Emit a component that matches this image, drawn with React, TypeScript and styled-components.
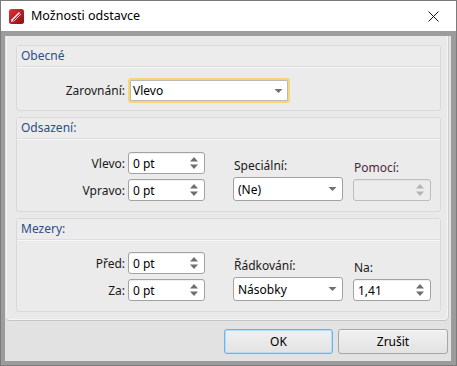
import React from "react";
import styled, { createGlobalStyle } from "styled-components";

const Global = createGlobalStyle`
  html, body { margin: 0; padding: 0; background: #ffffff; }
  body { font-family: "Segoe UI", "Noto Sans", "Open Sans", sans-serif; font-size: 12px; }
  * { box-sizing: border-box; }
`;

const Window = styled.div`
  width: 457px;
  height: 366px;
  border: 1px solid #7b7b7b;
  display: flex;
  flex-direction: column;
  background: #ffffff;
`;

const TitleBar = styled.div`
  height: 30px;
  display: flex;
  align-items: center;
  padding-left: 8px;
  background: #ffffff;
  flex: none;
`;

const TitleText = styled.div`
  margin-left: 7px;
  font-size: 12.5px;
  color: #000;
  flex: 1;
  padding-bottom: 1px;
`;

const CloseBtn = styled.div`
  width: 46px;
  height: 30px;
  display: flex;
  align-items: center;
  justify-content: center;
`;

const Frame = styled.div`
  flex: 1;
  background: #9c9c9c;
  padding: 5px 5px 4px 4px;
  display: flex;
`;

const Body = styled.div`
  flex: 1;
  background: #e2e2e2;
  display: flex;
  flex-direction: column;
  padding: 0 3px 0 1px;
`;

const Panel = styled.div`
  background: #e9e9e9;
  border: 1px solid #f4f4f4;
  border-top: none;
  border-radius: 0 0 4px 4px;
  box-shadow: 0 1px 0 #c4c4c4, 1px 0 0 #cfcfcf;
  padding: 9px 6px 7px 9px;
  display: flex;
  flex-direction: column;
  height: 284px;
`;

const Group = styled.div<{ $h: number; $mt: number }>`
  height: ${(p) => p.$h}px;
  margin-top: ${(p) => p.$mt}px;
  border: 1px solid #d9d9d9;
  border-radius: 3px;
  background: #ebebeb;
  display: flex;
  flex-direction: column;
  flex: none;
`;

const GroupHeader = styled.div`
  height: 21px;
  line-height: 20px;
  padding-left: 4px;
  color: #2d4e86;
  background: #ececec;
  border-bottom: 1px solid #dedede;
  box-shadow: 0 1px 0 #f6f6f6;
  flex: none;
`;

const GroupContent = styled.div<{ $top: number }>`
  padding-top: ${(p) => p.$top}px;
  display: flex;
  align-items: flex-end;
`;

const FieldGrid = styled.div<{ $cols: string }>`
  display: grid;
  grid-template-columns: ${(p) => p.$cols};
  row-gap: 5px;
  align-items: center;
`;

const Label = styled.div`
  text-align: right;
  padding-right: 3px;
  color: #1a1a1a;
`;

const Column = styled.div<{ $ml: number; $w: number }>`
  margin-left: ${(p) => p.$ml}px;
  width: ${(p) => p.$w}px;
  display: flex;
  flex-direction: column;
  gap: 3px;
`;

const ColLabel = styled.div<{ $dim?: boolean }>`
  color: ${(p) => (p.$dim ? "#4a2a3a" : "#1a1a1a")};
  padding-left: 1px;
`;

const Spin = styled.div<{ $disabled?: boolean }>`
  height: 22px;
  border: 1px solid ${(p) => (p.$disabled ? "#bdbdbd" : "#a2a2a2")};
  border-radius: 3px;
  background: ${(p) => (p.$disabled ? "#ececec" : "#ffffff")};
  display: flex;
  align-items: center;
  padding-left: 3px;
  color: #000;
  box-shadow: inset 0 1px 0 ${(p) => (p.$disabled ? "#e2e2e2" : "#f0f0f0")};
`;

const Combo = styled.div<{ $focus?: boolean; $w: number }>`
  width: ${(p) => p.$w}px;
  height: ${(p) => (p.$focus ? 25 : 24)}px;
  border: ${(p) => (p.$focus ? "2px solid #f7d67a" : "1px solid #a2a2a2")};
  border-radius: 3px;
  background: #ffffff;
  display: flex;
  align-items: center;
  padding-left: ${(p) => (p.$focus ? 2 : 3)}px;
  color: #000;
  box-shadow: ${(p) => (p.$focus ? "inset 0 0 0 1px #b9b9b9" : "none")};
`;

const ValueText = styled.span`
  flex: 1;
  padding-left: 1px;
`;

const ArrowBox = styled.div`
  width: 20px;
  display: flex;
  align-items: center;
  justify-content: center;
`;

const ButtonRow = styled.div`
  display: flex;
  justify-content: flex-end;
  gap: 5px;
  padding-top: 9px;
`;

const Button = styled.div<{ $primary?: boolean; $w: number }>`
  width: ${(p) => p.$w}px;
  height: 25px;
  border: 1px solid ${(p) => (p.$primary ? "#62b5ee" : "#a6a6a6")};
  border-radius: 3px;
  background: linear-gradient(#f0f0f0, #e3e3e3);
  box-shadow: ${(p) => (p.$primary ? "inset 0 0 0 1px #b5ddf7" : "inset 0 1px 0 #f8f8f8")};
  display: flex;
  align-items: center;
  justify-content: center;
  color: #000;
`;

const DownArrow = () => (
  <svg width="9" height="6" viewBox="0 0 9 6">
    <path d="M0.5 1 H8.5 L4.5 5 Z" fill="#707070" />
  </svg>
);

const SpinArrows = ({ dim }: { dim?: boolean }) => (
  <svg width="10" height="14" viewBox="0 0 10 14">
    <path d="M1 5.5 L5 1 L9 5.5 Z" fill={dim ? "#b3b3b3" : "#6e6e6e"} />
    <path d="M1 8.5 L5 13 L9 8.5 Z" fill={dim ? "#b3b3b3" : "#6e6e6e"} />
  </svg>
);

const SpinBox = ({ value, disabled }: { value: string; disabled?: boolean }) => (
  <Spin $disabled={disabled}>
    <ValueText>{value}</ValueText>
    <ArrowBox>
      <SpinArrows dim={disabled} />
    </ArrowBox>
  </Spin>
);

const ComboBox = ({ value, w, focus }: { value: string; w: number; focus?: boolean }) => (
  <Combo $w={w} $focus={focus}>
    <ValueText>{value}</ValueText>
    <ArrowBox>
      <DownArrow />
    </ArrowBox>
  </Combo>
);

const Logo = () => (
  <svg width="15" height="15" viewBox="0 0 15 15">
    <defs>
      <linearGradient id="lg" x1="0" y1="0" x2="1" y2="1">
        <stop offset="0" stopColor="#e0343a" />
        <stop offset="1" stopColor="#8c0d12" />
      </linearGradient>
    </defs>
    <rect x="0" y="0" width="15" height="15" rx="2.5" fill="url(#lg)" />
    <path d="M2.5 11.5 L10.5 3.5" stroke="#ffffff" strokeWidth="1.4" />
    <path d="M4.5 12.5 L12 5" stroke="#f3c9ca" strokeWidth="1" />
    <path d="M2 13 L3 10.5 L4.5 12 Z" fill="#ffffff" />
  </svg>
);

const CloseIcon = () => (
  <svg width="11" height="11" viewBox="0 0 11 11">
    <path d="M0.5 0.5 L10.5 10.5 M10.5 0.5 L0.5 10.5" stroke="#111" strokeWidth="1" />
  </svg>
);

export default function App() {
  return (
    <>
      <Global />
      <Window>
        <TitleBar>
          <Logo />
          <TitleText>Možnosti odstavce</TitleText>
          <CloseBtn>
            <CloseIcon />
          </CloseBtn>
        </TitleBar>
        <Frame>
          <Body>
            <Panel>
              <Group $h={66} $mt={0}>
                <GroupHeader>Obecné</GroupHeader>
                <GroupContent $top={11}>
                  <FieldGrid $cols="111px 162px">
                    <Label>Zarovnání:</Label>
                    <ComboBox value="Vlevo" w={162} focus />
                  </FieldGrid>
                </GroupContent>
              </Group>
              <Group $h={95} $mt={6}>
                <GroupHeader>Odsazení:</GroupHeader>
                <GroupContent $top={13}>
                  <FieldGrid $cols="111px 77px">
                    <Label>Vlevo:</Label>
                    <SpinBox value="0 pt" />
                    <Label>Vpravo:</Label>
                    <SpinBox value="0 pt" />
                  </FieldGrid>
                  <Column $ml={28} $w={110}>
                    <ColLabel>Speciální:</ColLabel>
                    <ComboBox value="(Ne)" w={110} />
                  </Column>
                  <Column $ml={10} $w={78}>
                    <ColLabel $dim>Pomocí:</ColLabel>
                    <SpinBox value="" disabled />
                  </Column>
                </GroupContent>
              </Group>
              <Group $h={94} $mt={6}>
                <GroupHeader>Mezery:</GroupHeader>
                <GroupContent $top={12}>
                  <FieldGrid $cols="111px 77px">
                    <Label>Před:</Label>
                    <SpinBox value="0 pt" />
                    <Label>Za:</Label>
                    <SpinBox value="0 pt" />
                  </FieldGrid>
                  <Column $ml={28} $w={110}>
                    <ColLabel>Řádkování:</ColLabel>
                    <ComboBox value="Násobky" w={110} />
                  </Column>
                  <Column $ml={10} $w={78}>
                    <ColLabel>Na:</ColLabel>
                    <SpinBox value="1,41" />
                  </Column>
                </GroupContent>
              </Group>
            </Panel>
            <ButtonRow>
              <Button $primary $w={109}>OK</Button>
              <Button $w={110}>Zrušit</Button>
            </ButtonRow>
          </Body>
        </Frame>
      </Window>
    </>
  );
}
